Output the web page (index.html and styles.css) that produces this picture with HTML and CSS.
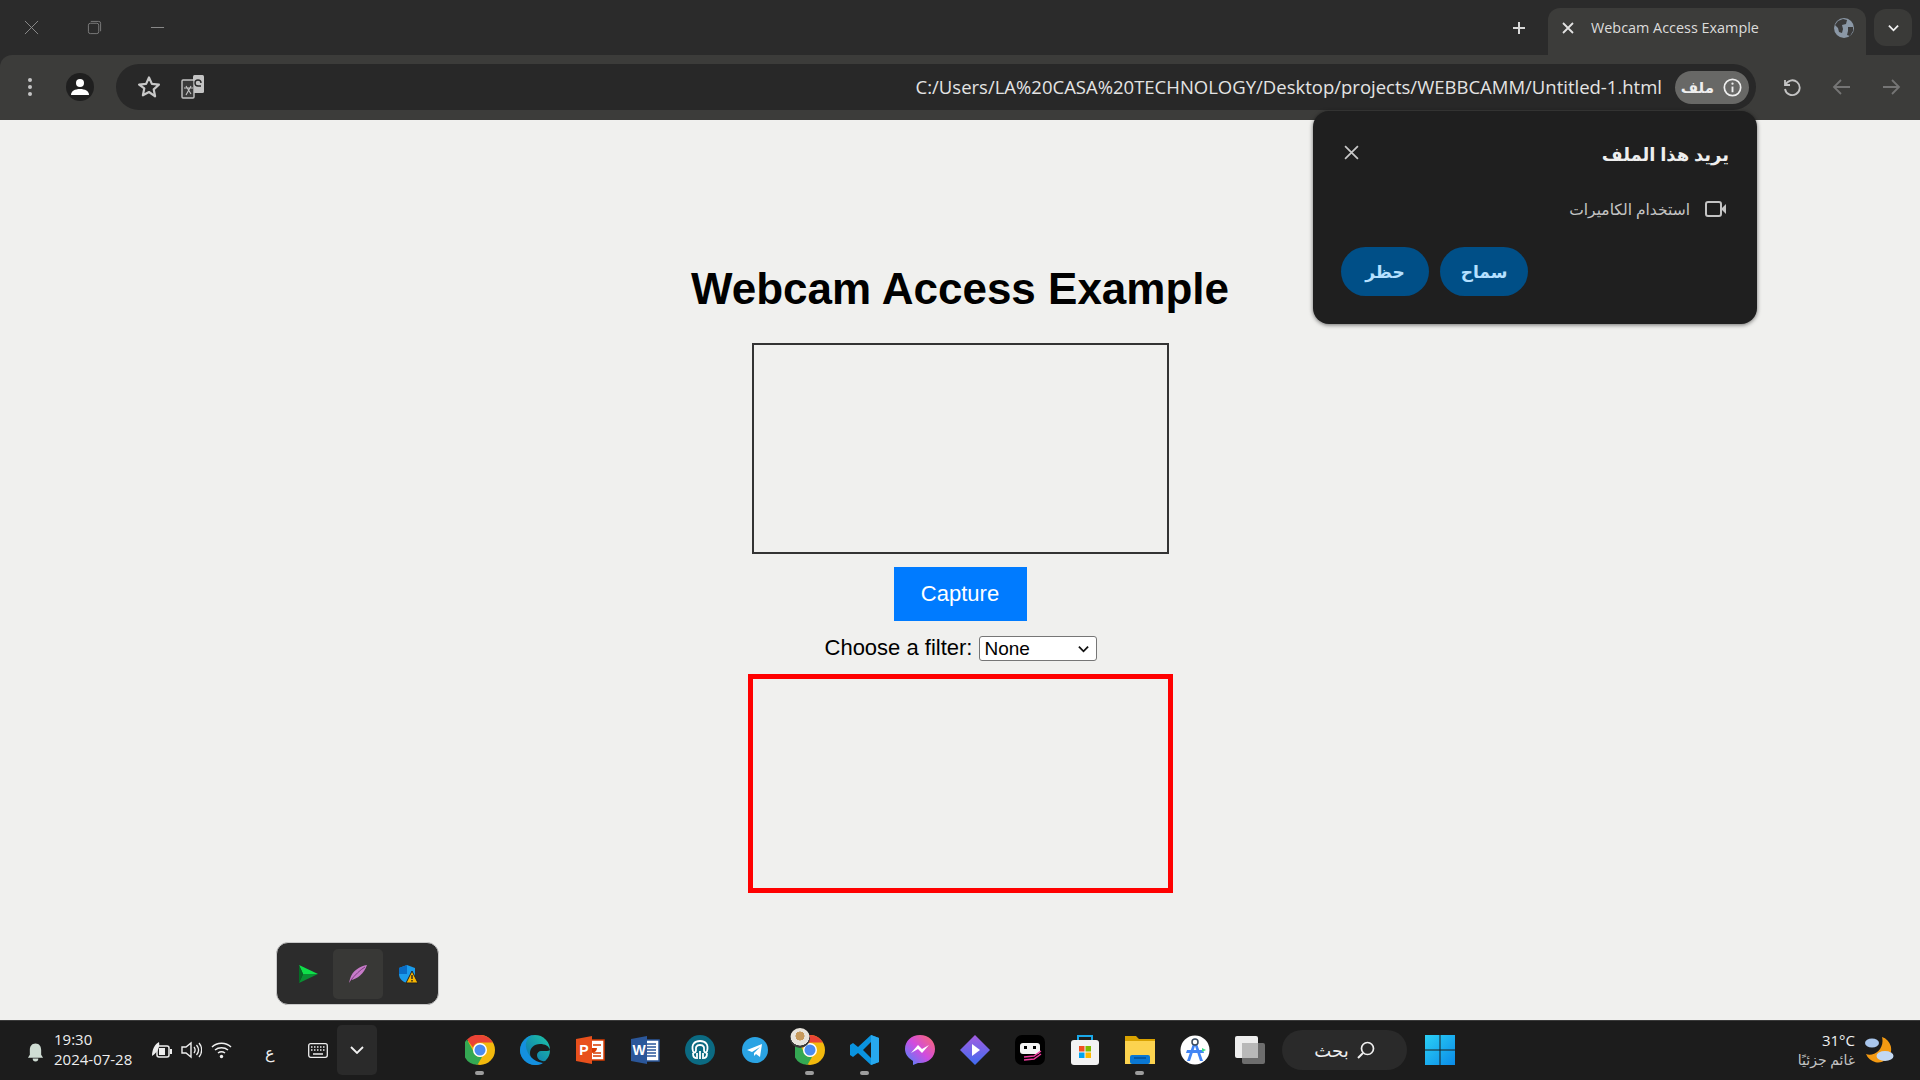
FILE: index.html
```html
<!DOCTYPE html>
<html lang="en">
<head>
<meta charset="utf-8">
<title>Webcam Access Example</title>
<link rel="stylesheet" href="styles.css">
</head>
<body>
<div class="app">
  <header class="titlebar">
    <div class="winctl">
      <svg class="wc" viewBox="0 0 16 16"><path d="M1 1l14 14M15 1L1 15" stroke="#8f8f8f" fill="none"/></svg>
      <svg class="wc" viewBox="0 0 16 16"><rect x="1.500" y="3.500" width="11" height="11" rx="2" stroke="#7e7e7e" fill="none"/><path d="M4 1.500h8.500a2 2 0 0 1 2 2V12" stroke="#7e7e7e" fill="none"/></svg>
      <svg class="wc" viewBox="0 0 16 16"><path d="M1 8h14" stroke="#8f8f8f" fill="none"/></svg>
    </div>
    <div class="tabs">
      <svg class="newtab" viewBox="0 0 16 16"><path d="M8 2v12M2 8h12" stroke="#d8d8d8" stroke-width="2" fill="none"/></svg>
      <div class="tab">
        <svg class="tabx" viewBox="0 0 12 12"><path d="M1 1l10 10M11 1L1 11" stroke="#e2e2e2" stroke-width="1.800" fill="none"/></svg>
        <span class="tabtitle">Webcam Access Example</span>
        <svg class="globe" viewBox="0 0 20 20"><circle cx="10" cy="10" r="10" fill="#8b98a6"/><path d="M4 3l5-2 4 1-1 4-4 1 1 4-1 4-3-1-1-4-3-3zM14 9l5 0 0 4-3 5-3-1 1-4z" fill="#3b3b3b"/></svg>
      </div>
      <div class="tabmenu"><svg class="tabchev" viewBox="0 0 12 8"><path d="M1 1.500l5 5 5-5" stroke="#f0f0f0" stroke-width="2" fill="none"/></svg></div>
    </div>
  </header>

  <nav class="toolbar">
    <svg class="kebab" viewBox="0 0 6 20"><circle cx="3" cy="3" r="2" fill="#c4c4c4"/><circle cx="3" cy="10" r="2" fill="#c4c4c4"/><circle cx="3" cy="17" r="2" fill="#c4c4c4"/></svg>
    <div class="avatar"><svg viewBox="0 0 18 18" class="avatar-i"><circle cx="9" cy="5" r="4" fill="#fff"/><path d="M0 17c0-4 4-6 9-6s9 2 9 6z" fill="#fff"/></svg></div>
    <div class="omnibox">
      <svg class="star" viewBox="0 0 24 24"><path d="M12 2.500l2.900 6.400 7 .8-5.200 4.700 1.400 6.900L12 17l-6.100 3.300 1.400-6.900L2.100 9.700l7-.8z" stroke="#c8c8c8" stroke-width="2.200" fill="none" stroke-linejoin="round"/></svg>
      <svg class="translate" viewBox="0 0 24 24"><rect x="12" y="0" width="11" height="18" rx="1.500" fill="#c4c4c4"/><rect x="1" y="5" width="12" height="18" rx="1" fill="#3a3a3a" stroke="#c4c4c4" stroke-width="1.400"/><path d="M5 11l5 8M10 11l-5 9M3 13h9" stroke="#c4c4c4" stroke-width="1.100" fill="none"/><path d="M20 8a3 3 0 1 0-3 3h3" stroke="#282828" stroke-width="1.400" fill="none"/></svg>
      <span class="url">C:/Users/LA%20CASA%20TECHNOLOGY/Desktop/projects/WEBBCAMM/Untitled-1.html</span>
      <div class="chip">
        <span class="chiptext" dir="rtl">ملف</span>
        <svg class="info" viewBox="0 0 20 20"><circle cx="10" cy="10" r="8.600" stroke="#eee" stroke-width="1.800" fill="none"/><path d="M10 9v6" stroke="#eee" stroke-width="2"/><circle cx="10" cy="6" r="1.200" fill="#eee"/></svg>
      </div>
    </div>
    <div class="navbtns">
      <svg class="nav" viewBox="0 0 20 20"><path d="M3 3v5h5M3.400 8a7.400 7.400 0 1 1-.4 4" stroke="#c4c4c4" stroke-width="1.800" fill="none"/></svg>
      <svg class="nav" viewBox="0 0 20 20"><path d="M18 10H3M9 3l-7 7 7 7" stroke="#757575" stroke-width="1.800" fill="none"/></svg>
      <svg class="nav" viewBox="0 0 20 20"><path d="M2 10h15M11 3l7 7-7 7" stroke="#757575" stroke-width="1.800" fill="none"/></svg>
    </div>
  </nav>

  <main class="page">
    <h1 class="heading">Webcam Access Example</h1>
    <div class="video"></div>
    <button class="capture" type="button">Capture</button>
    <div class="filter">
      <label class="filter-label" for="f">Choose a filter:</label>
      <select class="filter-select" id="f"><option>None</option></select>
    </div>
    <div class="canvas"></div>

    <aside class="popup" dir="rtl">
      <div class="popup-head">
        <span class="popup-title">يريد هذا الملف</span>
        <svg class="popup-x" viewBox="0 0 14 14"><path d="M1 1l12 12M13 1L1 13" stroke="#c8c8c8" stroke-width="1.600" fill="none"/></svg>
      </div>
      <div class="popup-row">
        <svg class="cam" viewBox="0 0 22 18"><rect x="1" y="2" width="15" height="14" rx="2" stroke="#c4c4c4" stroke-width="2" fill="none"/><path d="M16 9l5-5v10z" fill="#c4c4c4"/></svg>
        <span class="popup-perm">استخدام الكاميرات</span>
      </div>
      <div class="popup-btns">
        <button class="pbtn" type="button">سماح</button>
        <button class="pbtn" type="button">حظر</button>
      </div>
    </aside>

    <aside class="flyout">
      <div class="fly-item"><svg class="fly-i" viewBox="0 0 20 20"><path d="M1 1l19 9H5z" fill="#0fe04a"/><path d="M1 19l4-9h15z" fill="#0a8f33"/><path d="M1 1l4 9-4 9z" fill="#056b25"/></svg></div>
      <div class="fly-item fly-hover"><svg class="fly-i" viewBox="0 0 20 20"><path d="M19 1C12 2 4 7 2 15l-1 4 2-3C9 15 16 10 19 1z" fill="#c77bc9"/><path d="M3 16C7 11 12 6 17 3" stroke="#7d3f80" fill="none"/></svg></div>
      <div class="fly-item"><svg class="fly-i" viewBox="0 0 20 20"><path d="M9 1l8 3v6c0 5-4 8-8 9-4-1-8-4-8-9V4z" fill="#1a9bea"/><path d="M9 1v9H1V4z" fill="#0a6cc4"/><path d="M14 7l6 12H8z" fill="#f8b500" stroke="#1f1f1f"/><path d="M14 11v4M14 16v1.500" stroke="#222" stroke-width="1.400"/></svg></div>
    </aside>
  </main>

  <footer class="taskbar">
    <div class="tray">
      <svg class="bell" viewBox="0 0 18 20"><path d="M9 1c4 0 6 3 6 7v5l2 3H1l2-3V8c0-4 2-7 6-7z" fill="#cfdcd3"/><path d="M6 17h6c0 2-1 3-3 3s-3-1-3-3z" fill="#cfdcd3"/></svg>
      <div class="clock"><span>19:30</span><span>2024-07-28</span></div>
      <svg class="sys batt" viewBox="0 0 21 18"><path d="M1 15C1 8 4 3 8 1c1 5-1 10-7 14z" fill="#eee"/><rect x="6" y="5" width="12" height="11" rx="2" fill="none" stroke="#eee" stroke-width="1.500"/><rect x="8" y="7" width="6" height="7" fill="#eee"/><rect x="19" y="8" width="2" height="5" fill="#eee"/></svg>
      <svg class="sys" viewBox="0 0 21 18"><path d="M1 6h4l5-4v14l-5-4H1z" fill="none" stroke="#eee" stroke-width="1.400"/><path d="M13 6c1.500 2 1.500 4 0 6M15.500 4c2.500 3 2.500 7 0 10M18 2c3.500 4 3.500 10 0 14" stroke="#eee" stroke-width="1.300" fill="none"/></svg>
      <svg class="sys" viewBox="0 0 21 18"><path d="M1 6c5-5 14-5 19 0M4 9c3.500-3 9.500-3 13 0M7 12c2-1.500 5-1.500 7 0" stroke="#eee" stroke-width="1.500" fill="none"/><circle cx="10.500" cy="15.500" r="1.700" fill="#eee"/></svg>
      <span class="lang">ع</span>
      <svg class="kbd" viewBox="0 0 20 15"><rect x=".7" y=".7" width="18.600" height="13.600" rx="2" fill="none" stroke="#eee" stroke-width="1.300"/><path d="M3 4h14M3 7h14" stroke="#eee" stroke-width="1.500" stroke-dasharray="1.500 1.500"/><path d="M5 11h10" stroke="#eee" stroke-width="1.500"/></svg>
      <div class="traybtn"><svg class="traychev" viewBox="0 0 14 8"><path d="M1 1l6 6 6-6" stroke="#f2f2f2" stroke-width="1.800" fill="none"/></svg></div>
    </div>

    <div class="apps">
      <div class="app-slot running"><svg class="ai" viewBox="0 0 30 30"><circle cx="15" cy="15" r="15" fill="#f2b90d"/><path d="M15 0a15 15 0 0 1 13 7.500H15a7.500 7.500 0 0 0-7 5L2 4.500A15 15 0 0 1 15 0z" fill="#ea4335"/><path d="M2 4.500l6.500 12a7.500 7.500 0 0 0 8.500 5.500l-4.500 7.800A15 15 0 0 1 2 4.500z" fill="#34a853"/><circle cx="15" cy="15" r="7" fill="#fff"/><circle cx="15" cy="15" r="5.500" fill="#4a8cf0"/></svg></div>
      <div class="app-slot"><svg class="ai" viewBox="0 0 30 30"><defs><linearGradient id="eg" x1="0" y1="1" x2="1" y2="0"><stop offset="0" stop-color="#0a5fb4"/><stop offset="1" stop-color="#1ec8a5"/></linearGradient></defs><circle cx="15" cy="15" r="15" fill="url(#eg)"/><path d="M30 15c-1-4-5-6-10-6-6 0-10 4-10 9 0 6 5 10 12 10 3 0 5-1 6-2-4 1-11 0-11-6 0-2 2-4 4-4h6c2 0 3-1 3-1z" fill="#1c1c1c"/><path d="M0 15C1 6 8 0 15 0 8 1 5 7 6 12c1 7 7 15 17 16-3 2-6 2-8 2C7 30 0 23 0 15z" fill="#1490df"/></svg></div>
      <div class="app-slot"><svg class="ai" viewBox="0 0 30 30"><rect x="11" y="5" width="18" height="20" fill="#fff" stroke="#d83b01" stroke-width="1.500"/><path d="M17 8a5 5 0 1 0 5 5h-5z" fill="#d83b01"/><path d="M18 10h8M18 18h8M18 21h8" stroke="#d83b01" stroke-width="1.500"/><path d="M1 4l16-3v28L1 26z" fill="#e8501c"/><text x="9" y="20" class="ai-letter" text-anchor="middle">P</text></svg></div>
      <div class="app-slot"><svg class="ai" viewBox="0 0 30 30"><rect x="11" y="5" width="18" height="21" fill="#fff" stroke="#2b579a" stroke-width="1.500"/><path d="M17 9h9M17 12h9M17 15h9M17 18h9M17 21h9" stroke="#2b579a" stroke-width="1.500"/><path d="M1 4l16-3v28L1 26z" fill="#2b579a"/><text x="9" y="20" class="ai-letter" text-anchor="middle">W</text></svg></div>
      <div class="app-slot"><svg class="ai" viewBox="0 0 30 30"><circle cx="15" cy="15" r="15" fill="#0b6a82"/><path d="M8 16c-2-7 2-10 7-10s9 3 7 10c-1 3-3 1-3-1 0-1 1-5-4-5s-4 4-4 5c0 2-2 4-3 1z" fill="none" stroke="#fff" stroke-width="1.800"/><path d="M8 18c0 3 1 5 3 5M12 18v6M15 16v8M18 18v6M22 18c0 3-1 5-3 5" stroke="#fff" stroke-width="1.800" fill="none"/></svg></div>
      <div class="app-slot"><svg class="ai ai-s" viewBox="0 0 26 26"><circle cx="13" cy="13" r="13" fill="#2aa3e3"/><path d="M5 13l15-6-2 13-4-3-2 2v-3l6-6-8 5z" fill="#fff"/></svg></div>
      <div class="app-slot running"><svg class="ai" viewBox="0 0 30 30"><circle cx="15" cy="15" r="15" fill="#f2b90d"/><path d="M15 0a15 15 0 0 1 13 7.500H15a7.500 7.500 0 0 0-7 5L2 4.500A15 15 0 0 1 15 0z" fill="#ea4335"/><path d="M2 4.500l6.500 12a7.500 7.500 0 0 0 8.500 5.500l-4.500 7.800A15 15 0 0 1 2 4.500z" fill="#34a853"/><circle cx="15" cy="15" r="7" fill="#fff"/><circle cx="15" cy="15" r="5.500" fill="#4a8cf0"/></svg><span class="chrome-avatar"></span></div>
      <div class="app-slot running"><svg class="ai" viewBox="0 0 30 30"><path d="M21 0l8 3v24l-8 3L8 18l-5 4-3-2v-10l3-2 5 4z" fill="#0a94e0"/><path d="M21 7l-8 8 8 8z" fill="#1c1c1c"/><path d="M21 0l8 3v24l-8 3z" fill="#27a8ee"/></svg></div>
      <div class="app-slot"><svg class="ai" viewBox="0 0 30 30"><defs><linearGradient id="mg" x1="0" y1="1" x2="1" y2="0"><stop offset="0" stop-color="#3d8bff"/><stop offset=".5" stop-color="#d04ce0"/><stop offset="1" stop-color="#ff6a68"/></linearGradient></defs><path d="M15 0c8.500 0 15 6 15 14s-6.500 14-15 14l-2 0-5 2v-4C3 23 0 19 0 14 0 6 6.500 0 15 0z" fill="url(#mg)"/><path d="M6 18l7-8 4 4 7-4-7 8-4-4z" fill="#fff"/></svg></div>
      <div class="app-slot"><svg class="ai" viewBox="0 0 30 30"><defs><linearGradient id="pg" x1="0" y1="0" x2="0" y2="1"><stop offset="0" stop-color="#a35ce0"/><stop offset="1" stop-color="#3f6cf0"/></linearGradient></defs><path d="M15 0l15 15-15 15L0 15z" fill="url(#pg)"/><path d="M12 9l8 6-8 6z" fill="#fff"/></svg></div>
      <div class="app-slot"><svg class="ai" viewBox="0 0 30 30"><rect width="30" height="30" rx="7" fill="#000"/><rect x="5" y="8" width="20" height="11" rx="3" fill="#f4f4f4"/><rect x="9" y="11" width="3" height="3" fill="#000"/><rect x="18" y="11" width="3" height="3" fill="#000"/><path d="M9 22l10-1 7-5M9 25l10-1 7-5" stroke="#f03ca0" stroke-width="1.500" fill="none"/></svg></div>
      <div class="app-slot"><svg class="ai" viewBox="0 0 30 30"><path d="M8 6V1h14v5" stroke="#1aa8e8" stroke-width="2" fill="none"/><rect x="1" y="5" width="28" height="25" rx="3" fill="#f3f3f3"/><rect x="9" y="11" width="5.500" height="5.500" fill="#f25022"/><rect x="15.500" y="11" width="5.500" height="5.500" fill="#7fba00"/><rect x="9" y="17.500" width="5.500" height="5.500" fill="#00a4ef"/><rect x="15.500" y="17.500" width="5.500" height="5.500" fill="#ffb900"/></svg></div>
      <div class="app-slot running"><svg class="ai" viewBox="0 0 30 30"><path d="M0 1h11l3 3h16v25H0z" fill="#d9a200"/><path d="M0 6h30v23H0z" fill="#fcd34f"/><rect x="5" y="20" width="20" height="9" rx="2" fill="#0a78d4"/><path d="M9 23h12" stroke="#054f96" stroke-width="1.500"/></svg></div>
      <div class="app-slot"><svg class="ai" viewBox="0 0 30 30"><circle cx="15" cy="15" r="14.500" fill="#fff"/><path d="M15 3l-8 23h3l5-15 5 15h3z" fill="#4285f4"/><path d="M7 15h16l1 3H6z" fill="#4285f4"/><circle cx="15" cy="7" r="3" fill="#fff" stroke="#3a4a5c" stroke-width="1.500"/><path d="M22 13l4 2-4 2z" fill="#3ddc84"/></svg></div>
      <div class="app-slot"><svg class="ai" viewBox="0 0 30 30"><rect x="0" y="1" width="23" height="22" rx="2" fill="#eee"/><rect x="7" y="8" width="23" height="21" rx="2" fill="#6d6d6d"/><rect x="7" y="8" width="16" height="15" fill="#b9b9b9"/></svg></div>
      <div class="search"><svg class="search-i" viewBox="0 0 18 18"><circle cx="10.500" cy="7.500" r="6" stroke="#f0f0f0" stroke-width="1.700" fill="none"/><path d="M6 12l-5 5" stroke="#f0f0f0" stroke-width="2"/></svg><span class="search-t" dir="rtl">بحث</span></div>
      <svg class="win" viewBox="0 0 30 30"><defs><linearGradient id="wg" x1="0" y1="0" x2="1" y2="1"><stop offset="0" stop-color="#2bd0f5"/><stop offset="1" stop-color="#0a8be8"/></linearGradient></defs><path d="M0 0h14.500v14.500H0zM15.500 0H30v14.500H15.500zM0 15.500h14.500V30H0zM15.500 15.500H30V30H15.500z" fill="url(#wg)"/></svg>
    </div>

    <div class="weather">
      <div class="weather-t"><span class="temp">31°C</span><span class="cond" dir="rtl">غائم جزئيًا</span></div>
      <svg class="weather-i" viewBox="0 0 30 28"><path d="M17 1a13 13 0 1 1-16 17c8 3 19-5 16-17z" fill="#f49a12"/><ellipse cx="7" cy="7" rx="7" ry="4.500" fill="#a9c6ec"/><ellipse cx="20" cy="20" rx="8.500" ry="5" fill="#c3d8f2"/></svg>
    </div>
  </footer>
</div>
</body>
</html>
```
FILE: styles.css
```css
* { box-sizing: border-box; }
html, body { margin: 0; height: 100%; overflow: hidden; background: #2b2b2b; }
body { font-family: "Open Sans", "DejaVu Sans", sans-serif; }
.app { display: flex; flex-direction: column; height: 1080px; width: 1920px; }

/* Title bar */
.titlebar { height: 55px; background: #2b2b2b; display: flex; justify-content: space-between; align-items: flex-end; flex: none; }
.winctl { display: flex; align-items: center; gap: 48px; padding: 0 0 20px 24px; }
.wc { width: 15px; height: 15px; display: block; }
.tabs { display: flex; align-items: flex-end; height: 47px; }
.newtab { width: 16px; height: 16px; margin: 0 21px 19px 0; }
.tab { width: 318px; height: 47px; background: #3c3c3a; border-radius: 12px 12px 0 0; display: flex; align-items: center; padding: 0 12px 8px 14px; }
.tabx { width: 12px; height: 12px; flex: none; }
.tabtitle { color: #dcdcdc; font-size: 14.4px; margin-left: 17px; flex: 1; white-space: nowrap; }
.globe { width: 20px; height: 20px; flex: none; }
.tabmenu { width: 38px; height: 37px; background: #3a3a38; border-radius: 12px; margin: 0 8px 9px 8px; display: flex; align-items: center; justify-content: center; }
.tabchev { width: 11px; height: 8px; }

/* Toolbar */
.toolbar { height: 65px; background: #3c3c3a; border-radius: 12px 0 0 0; display: flex; align-items: center; flex: none; padding-bottom: 1px; }
.kebab { width: 6px; height: 20px; margin-left: 27px; flex: none; }
.avatar { width: 28px; height: 28px; background: #1f1f1f; border-radius: 50%; margin-left: 33px; display: flex; align-items: center; justify-content: center; flex: none; }
.avatar-i { width: 18px; height: 18px; }
.omnibox { width: 1640px; height: 46px; background: #282828; border-radius: 23px; margin-left: 22px; display: flex; align-items: center; padding: 0 7px 0 21px; flex: none; }
.star { width: 24px; height: 24px; flex: none; }
.translate { width: 24px; height: 24px; margin-left: 20px; flex: none; }
.url { flex: 1; text-align: right; color: #e4e4e4; font-size: 18.5px; white-space: nowrap; padding-right: 13px; margin-top: -2px; }
.chip { width: 74px; height: 33px; border-radius: 17px; background: #686866; display: flex; align-items: center; justify-content: flex-end; gap: 9px; padding-right: 7px; flex: none; }
.chiptext { color: #eee; font-size: 15px; font-weight: 600; }
.info { width: 19px; height: 19px; }
.navbtns { display: flex; gap: 29.500px; margin-left: 26px; }
.nav { width: 20px; height: 20px; }

/* Page */
.page { flex: 1; position: relative; background: #f0f0ee; display: flex; flex-direction: column; align-items: center; font-family: "Liberation Sans", Arial, sans-serif; color: #000; padding-top: 143px; }
.heading { font-size: 44px; line-height: 52px; font-weight: 700; margin: 0 0 28px; }
.video { width: 417px; height: 211px; border: 2px solid #333; flex: none; margin-left: 1px; }
.capture { margin-top: 13px; width: 133px; height: 54px; background: #007bff; color: #fff; border: 0; font-family: inherit; font-size: 22px; padding: 0; flex: none; }
.filter { margin-top: 15px; margin-left: 2px; height: 25px; display: flex; align-items: center; gap: 7px; }
.filter-label { font-size: 22px; margin-top: -2px; }
.filter-select { appearance: none; width: 118px; height: 25px; font-family: inherit; font-size: 19px; color: #000; border: 1px solid #767676; border-radius: 3px; padding: 0 0 0 4px; background: #fff url("data:image/svg+xml,%3Csvg xmlns='http://www.w3.org/2000/svg' viewBox='0 0 12 8'%3E%3Cpath d='M1 1.500l5 5 5-5' stroke='%23111' stroke-width='2' fill='none'/%3E%3C/svg%3E") no-repeat right 7px center / 11px 8px; }
.canvas { margin-top: 13px; width: 425px; height: 219px; border: 5px solid #f00; flex: none; }

/* Permission popup */
.popup { position: absolute; top: -9px; left: 1313px; width: 444px; height: 213px; background: #1f1f1f; border-radius: 16px; box-shadow: 0 1px 4px rgba(0,0,0,.55); font-family: "Open Sans", "DejaVu Sans", sans-serif; padding: 29px 28px 0 28px; display: flex; flex-direction: column; }
.popup-head { display: flex; justify-content: space-between; align-items: center; height: 28px; }
.popup-title { color: #eee; font-size: 18px; font-weight: 700; }
.popup-x { width: 15px; height: 15px; margin-left: 3px; margin-top: -3px; }
.popup-row { display: flex; align-items: center; gap: 15px; margin-top: 29px; height: 24px; }
.cam { width: 22px; height: 18px; margin-right: 2px; }
.popup-perm { color: #c4c4c4; font-size: 15.5px; }
.popup-btns { display: flex; gap: 11px; margin-top: 26px; justify-content: flex-end; }
.pbtn { width: 88px; height: 49px; background: #004f87; color: #b5e0ff; border: 0; border-radius: 25px; font-family: inherit; font-size: 17px; font-weight: 600; }

/* Tray flyout */
.flyout { position: absolute; left: 276px; top: 822px; width: 163px; height: 63px; background: #2c2c2c; border: 1px solid #c9c9c9; border-radius: 12px; display: flex; align-items: center; justify-content: center; }
.fly-item { width: 50px; height: 50px; display: flex; align-items: center; justify-content: center; border-radius: 5px; }
.fly-hover { background: #383836; }
.fly-i { width: 20px; height: 20px; }

/* Taskbar */
.taskbar { height: 60px; flex: none; background: #1c1c1c; border-top: 1px solid #3a3a3a; display: flex; align-items: center; color: #eee; padding-bottom: 1px; }
.tray { width: 452px; display: flex; align-items: center; flex: none; padding-left: 27px; }
.bell { width: 17px; height: 20px; margin-top: 3px; flex: none; }
.clock { display: flex; flex-direction: column; font-size: 15px; line-height: 20px; margin-left: 10px; margin-top: -2px; width: 94px; flex: none; }
.sys { width: 21px; height: 18px; margin-right: 9px; flex: none; }
.batt { margin-left: 3px; }
.lang { font-size: 16px; margin-left: 24px; width: 32px; margin-top: 4px; }
.kbd { width: 20px; height: 15px; flex: none; margin-left: 11px; }
.traybtn { width: 40px; height: 50px; background: #2a2a2a; border-radius: 5px; margin-left: 9px; display: flex; align-items: center; justify-content: center; flex: none; }
.traychev { width: 14px; height: 8px; }
.apps { display: flex; align-items: center; flex: none; }
.app-slot { width: 55px; height: 58px; display: flex; align-items: center; justify-content: center; position: relative; }
.ai { width: 30px; height: 30px; display: block; }
.ai-s { width: 26px; height: 26px; }
.ai-letter { font-family: "Liberation Sans", sans-serif; font-weight: 700; font-size: 14px; fill: #fff; }
.running::after { content: ""; position: absolute; left: 23px; bottom: 4px; width: 9px; height: 4px; background: #9d9d9d; border-radius: 2px; }
.chrome-avatar { position: absolute; left: 8px; top: 7px; width: 20px; height: 20px; border-radius: 50%; background: radial-gradient(circle at 50% 40%, #c79a5c 0 28%, #e8e4dc 30% 60%, #3a3a3a 62%); }
.search { width: 125px; height: 40px; background: #2a2a2a; border-radius: 20px; margin-left: 5px; display: flex; align-items: center; justify-content: center; gap: 8px; flex-direction: row-reverse; }
.search-i { width: 18px; height: 18px; }
.search-t { font-size: 18px; color: #eee; }
.win { width: 30px; height: 30px; margin-left: 18px; flex: none; }
.weather { margin-left: auto; display: flex; align-items: center; padding-right: 25px; }
.weather-t { display: flex; flex-direction: column; align-items: flex-end; font-size: 15px; line-height: 20px; margin-right: 10px; }
.temp { color: #f0f0f0; }
.cond { color: #c4c4c4; font-size: 14px; }
.weather-i { width: 30px; height: 28px; }
```
